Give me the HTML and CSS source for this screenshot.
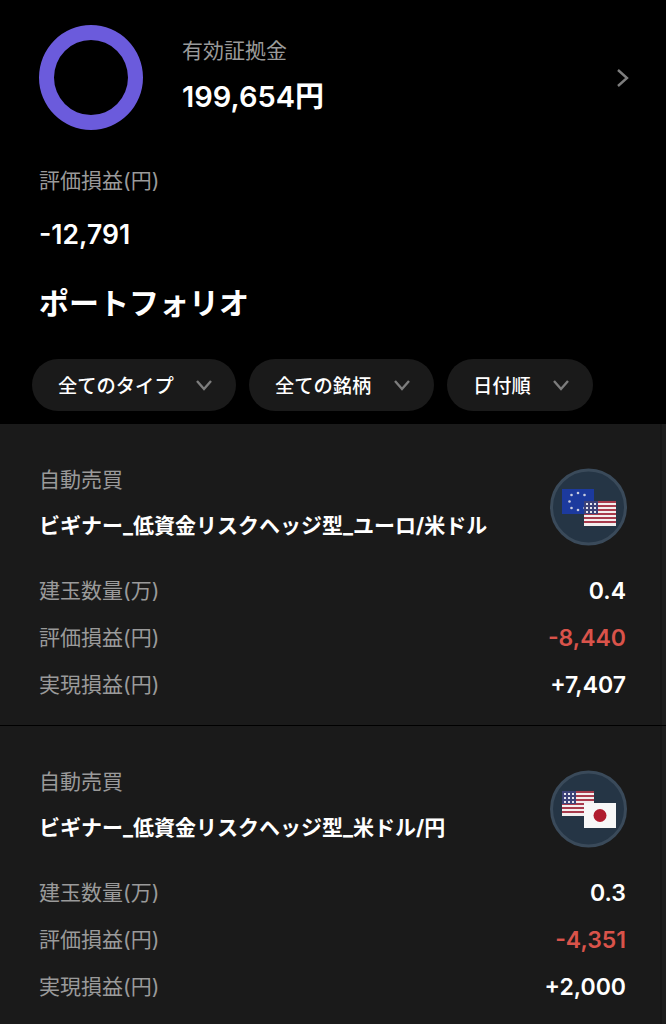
FILE: index.html
```html
<html>

<head>
	<meta charset="utf-8">
	<link rel="stylesheet" href="styles.css">
</head>

<body>
	<div class="summary">
		<div class="ring"></div>
		<div class="margin">
			<p class="label">有効証拠金</p>
			<p class="margin-value">199,654円</p>
		</div>
		<svg class="arrow" width="14" height="20" viewBox="0 0 14 20">
			<path d="M2 2 L11 10 L2 18" fill="none" stroke="#7d7d7d" stroke-width="2.4" />
		</svg>
	</div>
	<div class="profit">
		<p class="label">評価損益(円)</p>
		<p class="profit-value">-12,791</p>
	</div>
	<h1 class="title">ポートフォリオ</h1>
	<div class="filters">
		<div class="pill pill-type">全てのタイプ
			<svg width="18" height="12" viewBox="0 0 18 12"><path d="M2 2 L9 10 L16 2" fill="none" stroke="#7d7d7d" stroke-width="2.4" /></svg>
		</div>
		<div class="pill pill-brand">全ての銘柄
			<svg width="18" height="12" viewBox="0 0 18 12"><path d="M2 2 L9 10 L16 2" fill="none" stroke="#7d7d7d" stroke-width="2.4" /></svg>
		</div>
		<div class="pill pill-date">日付順
			<svg width="18" height="12" viewBox="0 0 18 12"><path d="M2 2 L9 10 L16 2" fill="none" stroke="#7d7d7d" stroke-width="2.4" /></svg>
		</div>
	</div>

	<div class="list">
		<!-- EUR/USD -->
		<div class="card">
			<div class="card-head">
				<div>
					<p class="label">自動売買</p>
					<p class="card-name">ビギナー_低資金リスクヘッジ型_ユーロ/米ドル</p>
				</div>
				<svg class="pair" width="77" height="78" viewBox="0 0 77 78">
					<circle cx="38.500" cy="39" r="37" fill="#253545" stroke="#3a4a5a" stroke-width="3" />
					<rect x="12" y="21" width="32" height="25" fill="#1c3a9e" />
					<g fill="#c9cde0">
						<circle cx="28" cy="25" r="1.3" /><circle cx="21.500" cy="27" r="1.3" /><circle cx="34.500" cy="27" r="1.300" />
						<circle cx="19.500" cy="33.500" r="1.300" /><circle cx="21.500" cy="40" r="1.300" /><circle cx="28" cy="42" r="1.300" /><circle cx="34.500" cy="40" r="1.300" />
					</g>
					<rect x="34" y="33" width="32" height="25" fill="#f3eeee" />
					<g fill="#a83a4c">
						<rect x="34" y="33" width="32" height="2" /><rect x="34" y="37" width="32" height="2" /><rect x="34" y="41" width="32" height="2" />
						<rect x="34" y="45" width="32" height="2" /><rect x="34" y="49" width="32" height="2" /><rect x="34" y="53" width="32" height="2" />
					</g>
					<rect x="34" y="33" width="14" height="13" fill="#3d4278" />
					<g fill="#e6e6ee">
						<rect x="36" y="35" width="2" height="2" /><rect x="40" y="35" width="2" height="2" /><rect x="44" y="35" width="2" height="2" />
						<rect x="36" y="39" width="2" height="2" /><rect x="40" y="39" width="2" height="2" /><rect x="44" y="39" width="2" height="2" />
						<rect x="36" y="43" width="2" height="2" /><rect x="40" y="43" width="2" height="2" /><rect x="44" y="43" width="2" height="2" />
					</g>
				</svg>
			</div>
			<div class="row"><span class="label">建玉数量(万)</span><span class="num">0.4</span></div>
			<div class="row"><span class="label">評価損益(円)</span><span class="num red">-8,440</span></div>
			<div class="row"><span class="label">実現損益(円)</span><span class="num">+7,407</span></div>
		</div>

		<!-- USD/JPY -->
		<div class="card">
			<div class="card-head">
				<div>
					<p class="label">自動売買</p>
					<p class="card-name">ビギナー_低資金リスクヘッジ型_米ドル/円</p>
				</div>
				<svg class="pair" width="77" height="78" viewBox="0 0 77 78">
					<circle cx="38.500" cy="39" r="37" fill="#253545" stroke="#3a4a5a" stroke-width="3" />
					<rect x="12" y="21" width="32" height="25" fill="#f3eeee" />
					<g fill="#a83a4c">
						<rect x="12" y="21" width="32" height="2" /><rect x="12" y="25" width="32" height="2" /><rect x="12" y="29" width="32" height="2" />
						<rect x="12" y="33" width="32" height="2" /><rect x="12" y="37" width="32" height="2" /><rect x="12" y="41" width="32" height="2" />
					</g>
					<rect x="12" y="21" width="14" height="13" fill="#3d4278" />
					<g fill="#e6e6ee">
						<rect x="14" y="23" width="2" height="2" /><rect x="18" y="23" width="2" height="2" /><rect x="22" y="23" width="2" height="2" />
						<rect x="14" y="27" width="2" height="2" /><rect x="18" y="27" width="2" height="2" /><rect x="22" y="27" width="2" height="2" />
						<rect x="14" y="31" width="2" height="2" /><rect x="18" y="31" width="2" height="2" /><rect x="22" y="31" width="2" height="2" />
					</g>
					<rect x="34" y="33" width="32" height="25" fill="#f7f7f7" />
					<circle cx="50" cy="45.500" r="6.500" fill="#b01c2e" />
				</svg>
			</div>
			<div class="row"><span class="label">建玉数量(万)</span><span class="num">0.3</span></div>
			<div class="row"><span class="label">評価損益(円)</span><span class="num red">-4,351</span></div>
			<div class="row"><span class="label">実現損益(円)</span><span class="num">+2,000</span></div>
		</div>
	</div>
</body>

</html>
```

FILE: styles.css
```css
html,
body {
	height: 100%;
}

body {
	margin: 0;
	overflow: hidden;
	background-color: #000;
	color: #fff;
	font-family: Inter, "Noto Sans CJK JP", sans-serif;
}

p,
h1 {
	margin: 0;
}

.label {
	font-size: 21px;
	line-height: 28px;
	color: #9a9a9a;
	margin-left: -1px;
}

.summary {
	display: flex;
	align-items: center;
	padding: 25px 36px 0 39px;
}

.ring {
	box-sizing: border-box;
	width: 104px;
	height: 105px;
	border: 15px solid #6b5bdc;
	border-radius: 50%;
}

.margin {
	flex: 1;
	margin-left: 39px;
	margin-top: -3px;
}

.margin .label {
	margin-left: 0;
}

.margin-value {
	margin-top: 14px;
	font-size: 29px;
	line-height: 36px;
	font-weight: 600;
}

.profit {
	padding: 37px 40px 0;
}

.profit-value {
	margin-top: 23px;
	margin-left: -1px;
	font-size: 26.500px;
	line-height: 32px;
	font-weight: 600;
}

.title {
	padding: 32px 39px 0;
	font-size: 30px;
	line-height: 42px;
	font-weight: 700;
}

.filters {
	display: flex;
	gap: 13px;
	padding: 35px 32px 0;
}

.pill {
	display: flex;
	align-items: center;
	justify-content: space-between;
	box-sizing: border-box;
	height: 52px;
	padding: 0 23px 0 26px;
	border-radius: 26px;
	background-color: #1a1a1a;
	font-size: 19.300px;
	font-weight: 500;
}

.pill-type {
	width: 204px;
}

.pill-brand {
	width: 185px;
}

.pill-date {
	width: 146px;
}

.list {
	margin-top: 13px;
}

/* thin scrollbar track down the right edge */
.card {
	box-sizing: border-box;
	height: 302px;
	padding: 42px 40px 0;
	border-bottom: 1px solid #000;
	background: linear-gradient(to right, #1a1a1a 660px, #161616 660px, #161616 662px, #1c1c1c 662px);
}

.card-head {
	display: flex;
	justify-content: space-between;
	align-items: flex-start;
	height: 101px;
	margin-right: -1px;
}

.card-name {
	margin-top: 18px;
	margin-left: -1px;
	font-size: 21px;
	line-height: 28px;
	font-weight: 700;
	white-space: nowrap;
}

.pair {
	margin-top: 2px;
}

.row {
	display: flex;
	justify-content: space-between;
	align-items: center;
	height: 47px;
}

.num {
	font-size: 23px;
	font-weight: 600;
}

.red {
	color: #d9534a;
}
```
